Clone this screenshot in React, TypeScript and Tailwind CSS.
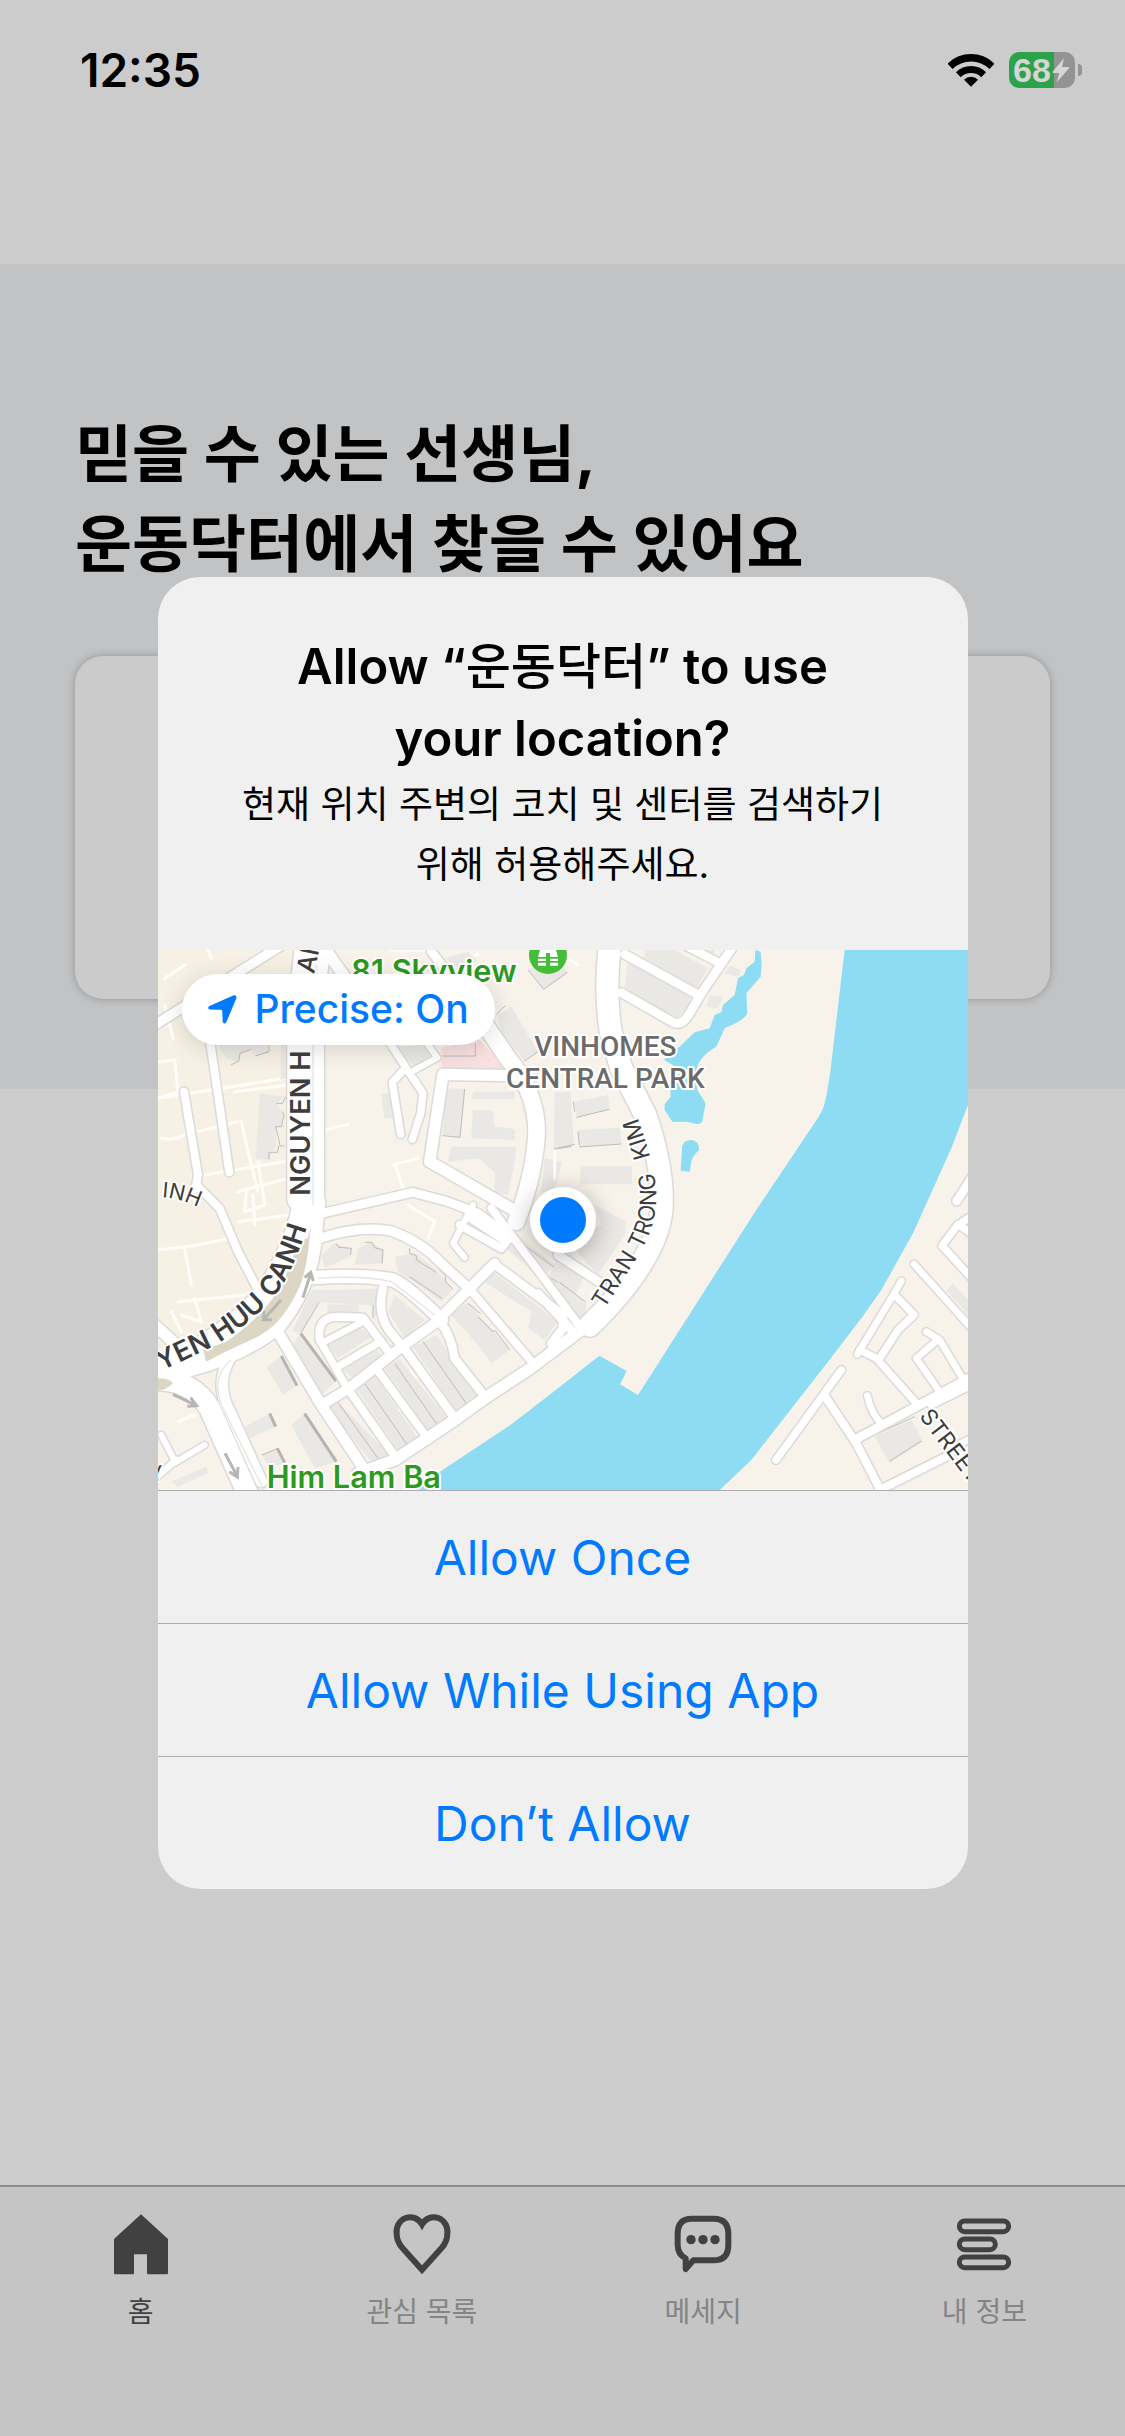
import React from "react";

type Road = [width: number, d: string];
type Sector = { at: string; roads: Road[]; lanes: string[]; buildings: string[]; edges: string[] };

/* The city map is drawn in four sectors, each with its own origin. */
const sectors: Sector[] = [
  {
    at: "translate(0 0)",
    roads: [
      [28, "M-10 240 L380 -5"],
      [34, "M500 10 L570 110 L700 290"],
      [26, "M820 20 L1000 250"],
      [24, "M155 280 L214 682"],
      [24, "M78 440 L120 690 L112 735"],
      [22, "M690 285 L745 370 L795 445 L788 505 L763 583"],
      [22, "M740 372 L703 412 L728 568"],
      [18, "M770 375 L838 338 L800 285"],
      [34, "M1060 392 L855 388 L815 650 L1075 800"],
      [50, "M985 245 L1050 340 Q1135 440 1136 560 Q1130 690 1075 830"],
      [26, "M480 808 L765 742 L870 770 L960 805 L1060 880"],
      [84, "M455 -20 L430 220 L430 760"],
      [28, "M505 0 L484 160 L484 780"],
    ],
    lanes: [
      "M0 460 L380 400", "M140 690 L380 650", "M230 440 L390 420", "M0 350 L50 345 L60 440 L0 460",
      "M250 530 L270 620 L300 740", "M20 180 L45 280", "M120 560 L240 530", "M300 650 L320 780 L260 800 L265 740",
      "M500 555 L570 538", "M705 660 L780 640", "M710 655 L735 730", "M10 580 Q60 590 90 560", "M700 15 L820 15",
      "M240 740 L390 700", "M150 15 L160 40 M20 100 L80 60", "M960 30 L860 50",
    ],
    buildings: [
      "M180 300 L330 300 L330 325 L290 330 L280 312 L245 325 L240 350 L205 340Z",
      "M305 445 L380 455 L355 475 L378 510 L370 545 L355 545 L355 600 L330 645 L293 643Z",
      "M368 300 L388 300 L388 400 L368 405Z",
      "M865 430 L920 432 L906 577 L853 572Z",
      "M945 440 L1070 440 L1070 462 L940 462Z",
      "M945 495 L1005 497 L1010 545 L1072 552 L1070 585 L940 580Z",
      "M880 605 L1075 605 L1070 650 L1050 750 L1010 745 L1010 680 L960 640 L870 650Z",
      "M1020 210 L1060 185 L1140 320 L1100 348 L1030 265Z",
      "M860 40 L930 20 L960 50 L900 70Z",
      "M1110 70 L1220 70 L1228 85 L1157 133Z",
      "M1190 440 L1240 440 L1240 605 L1188 612Z",
      "M1160 640 L1212 650 L1190 740 L1150 740Z",
      "M708 305 L800 300 L830 330 L765 360Z",
      "M670 450 L695 440 L705 520 L680 520Z",
    ],
    edges: [
      "M219 360 L243 347 L246 325 L280 313 M292 333 L333 320 V300",
      "M386 450 L374 475 L355 475 M374 500 L378 510 L370 545 H353 L362 580 L366 603 H380 M362 603 L358 622 H333 V643",
      "M920 432 L906 577 L853 572", "M1015 208 L1042 182", "M1100 348 L1140 320", "M1110 75 L1157 133 L1228 82",
      "M1188 612 L1240 605", "M855 333 H952 V295",
    ],
  },
  {
    at: "translate(1200 0)",
    roads: [
      [66, "M158 -20 Q138 130 158 260 L190 370 L262 510 Q320 680 310 800 Q292 950 95 1142"],
      [26, "M200 28 L425 152"],
      [26, "M190 143 L345 232 Q372 245 395 205 L430 145 L535 -10"],
      [24, "M360 -10 L480 52"],
      [26, "M1196 768 L1260 670"],
      [22, "M1200 840 L1260 800"],
    ],
    lanes: ["M0 20 L60 60", "M-10 620 L-10 700"],
    buildings: [
      "M210 50 L400 155 L380 200 L350 222 L200 125Z",
      "M260 15 L350 15 L450 70 L415 130 L260 40Z",
      "M375 15 L470 15 L470 35 L440 45Z",
      "M515 62 L550 75 L540 95 L500 85Z",
      "M455 150 L495 155 L480 190 L445 185Z",
      "M48 470 L150 450 L155 493 L55 517Z",
      "M62 555 L185 548 L190 596 L64 606Z",
      "M68 662 L222 662 L222 718 L66 718Z",
      "M0 450 L40 470 L48 600 L0 608Z",
      "M110 780 L205 830 L200 870 L130 840Z",
    ],
    edges: ["M55 517 L155 493 M46 470 L50 500", "M64 606 L190 597 M60 560 L64 600", "M0 609 L50 598"],
  },
  {
    at: "translate(0 810)",
    roads: [
      [24, "M115 -90 L185 -20 L240 110 L300 225"],
      [28, "M485 70 Q610 30 700 48 Q790 80 850 145 L935 222"],
      [40, "M470 188 Q610 178 705 195 Q750 215 850 315"],
      [18, "M945 -30 L885 85 L920 128"],
      [24, "M905 30 L1030 100 L1045 80 L930 5"],
      [30, "M1010 145 L930 225 L830 325 L725 400 L570 522 L490 570"],
      [26, "M1010 148 L1215 300 L1215 340 L1180 385 L1190 410"],
      [34, "M1290 330 L1110 465 L980 550 L880 622 L710 735 L600 775"],
      [24, "M935 222 L1130 450"],
      [26, "M845 320 Q880 360 890 430 L985 550"],
      [26, "M675 220 Q655 300 700 355 L740 402 L890 610"],
      [24, "M655 460 L812 675"],
      [24, "M570 522 L715 730"],
      [32, "M365 360 L490 570 L620 765"],
      [24, "M485 375 Q475 305 540 305 L615 308 L685 402"],
      [22, "M485 375 L565 515"],
      [20, "M490 385 L615 320"],
      [22, "M540 455 L670 378"],
      [70, "M445 -60 Q420 90 330 230 Q240 340 110 410 L-20 470"],
      [36, "M484 -40 L470 100 Q450 230 365 335 Q290 400 150 450 L-20 500"],
      [62, "M-20 495 Q100 490 155 580 L275 850"],
      [34, "M215 430 Q170 510 215 590 L310 800"],
      [34, "M-10 330 L120 450"],
      [18, "M10 660 L52 742 L140 690"],
      [20, "M55 735 L-10 790"],
    ],
    lanes: [
      "M0 105 L120 90", "M80 100 L100 210", "M120 90 L220 70", "M60 260 L260 240", "M110 250 L130 320 L70 300",
      "M285 -60 L290 30", "M240 20 L400 0", "M750 -30 L830 20 L810 70", "M60 620 L110 600", "M40 290 L70 350",
      "M760 490 L860 450", "M760 470 L820 600", "M670 610 L740 580",
    ],
    buildings: [
      "M490 120 L530 85 L580 100 L578 125 L500 158Z",
      "M600 100 L640 82 L675 105 L670 145 L590 150Z",
      "M710 125 L770 115 L830 160 L885 222 L850 260 L760 195 L720 170Z",
      "M460 225 L680 222 L650 310 L640 270 L480 262 L430 355 L402 350Z",
      "M508 268 L602 268 L602 295 L508 295Z",
      "M425 355 L535 498 L480 550 L400 400Z",
      "M505 380 L600 335 L640 365 L540 430Z",
      "M555 465 L655 405 L675 425 L585 490Z",
      "M505 580 L540 562 L695 720 L650 750Z",
      "M595 520 L650 480 L790 685 L730 720Z",
      "M680 460 L725 432 L875 620 L820 660Z",
      "M765 395 L835 360 L965 555 L905 605Z",
      "M690 290 L710 240 L800 315 L740 368Z",
      "M880 300 L930 262 L1055 404 L1000 445 L960 390Z",
      "M970 195 L1005 170 L1200 320 L1160 375 L1110 340 L1120 290Z",
      "M325 455 L370 425 L418 510 L375 540Z",
      "M260 635 L335 595 L352 635 L275 670Z",
      "M400 630 L440 598 L535 740 L470 760Z",
      "M310 720 L360 700 L385 750 L330 750Z",
      "M1030 90 L1080 60 L1190 150 L1150 190Z",
      "M40 800 L145 755 L150 775 L60 815Z",
      "M1200 120 L1240 110 L1275 190 L1240 270 L1160 215Z",
    ],
    edges: [
      "M535 85 L542 97 L580 100 L578 120 M620 82 H642 L650 98 L675 105 L672 146",
      "M755 100 V115 L775 122 V135 L835 172 M845 165 L862 183 V200 L885 222 M755 185 L852 250",
      "M430 352 L483 262", "M930 265 L968 296 M960 306 L1005 350 L1012 347 L1055 404",
      "M1075 72 L1187 156", "M1165 218 L1180 190 L1230 220", "M540 562 L660 730", "M620 505 L755 700",
      "M710 445 L845 640", "M795 380 L935 580", "M645 270 V310", "M312 720 L360 700",
    ],
  },
  {
    at: "translate(1200 810)",
    roads: [
      [24, "M-200 -20 L70 340"],
      [26, "M0 120 L130 205"],
      [26, "M-60 235 L50 355 L-60 440"],
      [22, "M654 735 L850 465"],
      [24, "M802 545 L895 685 L975 840"],
      [26, "M895 672 L1260 475"],
      [22, "M1120 570 L1260 500"],
      [20, "M928 542 Q940 600 975 630"],
      [20, "M898 418 L1000 250 L1030 198"],
      [22, "M1015 245 L1068 300 L1020 345 L965 430"],
      [22, "M905 405 L955 430 L1080 570"],
      [20, "M1105 350 L1145 375 L1220 500"],
      [20, "M1135 378 L1075 430 L1145 530"],
      [20, "M1068 147 L1250 350"],
      [22, "M1260 210 L1152 92 L1200 28 L1260 70"],
      [24, "M965 825 L1175 720"],
      [20, "M1180 700 L1260 660"],
    ],
    lanes: ["M0 330 L30 370"],
    buildings: [
      "M950 665 L1060 615 L1095 680 L995 745Z",
      "M1165 225 L1185 205 L1230 255 L1230 300Z",
      "M0 200 L85 262 L80 320 L0 255Z",
      "M20 70 L130 30 L200 60 L120 180Z",
    ],
    edges: ["M995 738 L1090 678", "M960 655 L1070 605", "M5 202 L82 260"],
  },
];

const halo = {
  stroke: "#ffffff",
  strokeWidth: 12,
  strokeLinejoin: "round" as const,
  paintOrder: "stroke" as const,
};

function CityMap() {
  return (
    <svg viewBox="0 15 2430 1620" className="block w-full" role="img" aria-label="Map of Vinhomes Central Park">
      <defs>
        <path id="canh" d="M10 1278 L160 1207 Q330 1105 385 1000 Q435 905 457 800" />
        <path id="kim" d="M1336 1096 L1435 942 Q1495 850 1495 750 Q1490 640 1415 460" />
        <path id="inh" d="M4 757 Q70 757 150 802" />
        <path id="street" d="M2282 1414 L2500 1700" />
      </defs>
      <rect y="15" width="2430" height="1620" fill="#f7f3eb" />
      <path d="M0 15 H410 L388 400 V780 L330 1030 L120 1230 L0 1290Z" fill="#f6f1e4" />
      <path d="M850 310 L960 280 L1045 370 L850 368Z" fill="#f8dfe0" />
      <g fill="#8ddcf4">
        <path d="M2060 15 L2017 380 L2006 450 L1997 485 L1984 512 L1785 810 L1440 1350 L1386 1318 L1406 1278 L1324 1232 L1200 1330 L1060 1438 L858 1572 L760 1640 H1680 L1780 1545 L2010 1250 L2110 1120 L2170 1035 L2265 865 L2380 610 L2430 480 V15Z" />
        <path d="M1792 15 L1808 20 L1811 60 L1808 95 L1765 145 L1768 205 Q1760 225 1700 250 L1675 305 Q1620 335 1615 380 L1618 435 L1643 475 L1632 532 L1620 538 L1585 530 H1543 L1520 495 V478 L1538 455 L1535 400 L1580 380 L1518 345 L1565 305 L1610 262 L1655 250 L1670 210 L1690 202 L1695 180 L1730 150 L1740 100 L1758 90 L1765 70 L1790 50Z" />
        <path d="M1572 615 Q1570 585 1600 585 Q1625 588 1623 615 Q1602 635 1600 650 L1595 680 L1568 677Z" />
      </g>
      {sectors.map((s) => (
        <g key={s.at} transform={s.at}>
          {s.lanes.map((d) => (
            <path key={d} d={d} fill="none" stroke="#fffdf8" strokeWidth="9" strokeLinecap="round" />
          ))}
          {s.buildings.map((d) => (
            <path key={d} d={d} fill="#eae8e4" />
          ))}
          {s.edges.map((d) => (
            <path key={d} d={d} fill="none" stroke="#bdbcb9" strokeWidth="3" />
          ))}
        </g>
      ))}
      <g stroke="#b5b4b0" strokeWidth="9" fill="none">
        <path d="M428 1165 L534 1308 M370 1233 L417 1322 M335 1405 L353 1445 M440 1406 L535 1550 M358 1510 L380 1553" />
      </g>
      {sectors.map((s) => (
        <g key={s.at} transform={s.at} fill="none" stroke="#dbdad8" strokeLinecap="round" strokeLinejoin="round">
          {s.roads.map(([w, d]) => (
            <path key={d} d={d} strokeWidth={w + 9} />
          ))}
        </g>
      ))}
      {sectors.map((s) => (
        <g key={s.at} transform={s.at} fill="none" stroke="#ffffff" strokeLinecap="round" strokeLinejoin="round">
          {s.roads.map(([w, d]) => (
            <path key={d} d={d} strokeWidth={w} />
          ))}
        </g>
      ))}
      <path
        d="M452 880 Q450 960 425 1025 Q380 1120 330 1155 Q290 1185 230 1205 L145 1250 L135 1215 L205 1190 Q320 1110 370 1020 Q410 940 415 890Z"
        fill="#dcd7c5"
      />
      <path d="M0 1300 Q35 1300 45 1315 Q25 1335 0 1338Z" fill="#dcd7c5" />
      <path d="M475 60 L465 300 V780 M220 1245 Q150 1300 200 1400 L320 1640 M480 1000 Q620 990 700 1010 L830 1110" fill="none" stroke="#e6e5e4" strokeWidth="4" />
      <g fill="none" stroke="#b6b6b5" strokeWidth="9">
        <path d="M435 1058 L458 985 M440 998 L458 982 L466 1008" />
        <path d="M369 1065 L318 1122 M318 1098 L316 1124 L342 1124" />
        <path d="M45 1348 L112 1380 M98 1358 L116 1382 L88 1384" />
        <path d="M201 1525 L237 1592 M214 1580 L238 1596 L240 1566" />
      </g>

      <g fontFamily="Inter, 'Liberation Sans', sans-serif" fill="#3d3d3d">
        <text fontSize="82" fontWeight="600" transform="translate(456 752) rotate(-90)" {...halo}>NGUYEN H</text>
        <text fontSize="76" fontWeight="500" transform="translate(468 88) rotate(-78)" {...halo}>AI</text>
        <text fontSize="82" fontWeight="600" {...halo}><textPath href="#canh">YEN</textPath></text>
        <text fontSize="82" fontWeight="600" {...halo}><textPath href="#canh" startOffset="194">HUU</textPath></text>
        <text fontSize="82" fontWeight="600" {...halo}><textPath href="#canh" startOffset="400">CANH</textPath></text>
        <text fontSize="68" {...halo}><textPath href="#kim" startOffset="4">TRAN</textPath></text>
        <text fontSize="68" {...halo}><textPath href="#kim" startOffset="214">TRONG</textPath></text>
        <text fontSize="68" {...halo}><textPath href="#kim" startOffset="502">KIM</textPath></text>
        <text fontSize="64" {...halo}><textPath href="#inh" startOffset="8">INH</textPath></text>
        <text fontSize="68" {...halo}><textPath href="#street">STREET</textPath></text>
        <text fontSize="64" transform="translate(-24 1612) rotate(-8)" {...halo}>Y</text>
        <text x="326" y="1628" fontSize="92" fontWeight="600" {...halo} fill="#2b9a1f">Him Lam Ba</text>
        <text x="580" y="112" fontSize="92" fontWeight="600" {...halo} fill="#2b9a1f">81 Skyview</text>
      </g>
      <g fontFamily="Roboto, 'Liberation Sans', sans-serif" fontSize="84" fontWeight="500" fill="#6b6b6b" textAnchor="middle">
        <text x="1342" y="333" {...halo}>VINHOMES</text>
        <text x="1342" y="430" {...halo}>CENTRAL PARK</text>
      </g>
      <circle cx="1170" cy="30" r="57" fill="#45bd38" />
      <g fill="#ffffff">
        <path d="M1148 8 H1163 V14 H1177 V8 H1192 L1200 36 H1176 V24 H1164 V36 H1140Z" />
        <path d="M1140 41 H1164 V48 H1140Z M1176 41 H1200 V48 H1176Z M1140 53 H1164 V62 H1140Z M1176 53 H1200 V62 H1176Z" />
      </g>
    </svg>
  );
}

function WifiIcon() {
  return (
    <svg viewBox="54 35 138 102" className="w-[46px]" aria-label="Wi-Fi">
      <path d="M60 75 A90 90 0 0 1 186 75" fill="none" stroke="#000" strokeWidth="22" />
      <path d="M85 100 A55 55 0 0 1 161 100" fill="none" stroke="#000" strokeWidth="21" />
      <path d="M123 136 L102 115 A30 30 0 0 1 144 115Z" />
    </svg>
  );
}

function Battery() {
  return (
    <div className="flex items-center gap-[3px]" aria-label="Battery 68%, charging">
      <div className="flex h-9 w-[66px] items-center gap-px rounded-[10px] bg-linear-to-r from-[#2ea24a] from-68% to-[#939393] to-68% pl-1 text-[#d6d6d6]">
        <span className="font-['Liberation_Sans',sans-serif] text-[34px] leading-9 font-bold">68</span>
        <svg viewBox="0 0 54 74" className="w-[18px]" aria-hidden="true">
          <path d="M36 0 L2 41 Q0 45 5 45 H22 L14 73 L51 31 Q53 27 48 27 H30Z" fill="currentColor" />
        </svg>
      </div>
      <div className="h-3 w-1 rounded-r-full bg-[#939393]" />
    </div>
  );
}

const tabs = [
  {
    label: "홈",
    active: true,
    icon: (
      <path d="M96 16 L177 90 V193 Q177 196 174 196 H117 Q114 196 114 193 V136 H75 V193 Q75 196 72 196 H18 Q15 196 15 193 V90Z" fill="currentColor" />
    ),
  },
  {
    label: "관심 목록",
    active: false,
    icon: (
      <path d="M96 182 L38 118 Q20 98 20 74 A41 43 0 0 1 96 46 A41 43 0 0 1 172 74 Q172 98 154 118Z" fill="none" stroke="currentColor" strokeWidth="18" />
    ),
  },
  {
    label: "메세지",
    active: false,
    icon: (
      <>
        <path d="M62 29 H128 Q172 29 172 75 V108 Q172 154 128 154 H67 L44 180 V148 Q20 136 20 108 V75 Q20 29 62 29Z" fill="none" stroke="currentColor" strokeWidth="18" strokeLinejoin="round" />
        <circle cx="60" cy="92" r="14" fill="currentColor" />
        <circle cx="96" cy="92" r="14" fill="currentColor" />
        <circle cx="132" cy="92" r="14" fill="currentColor" />
      </>
    ),
  },
  {
    label: "내 정보",
    active: false,
    icon: (
      <g fill="none" stroke="currentColor" strokeWidth="15">
        <rect x="22" y="36" width="148" height="32" rx="16" />
        <rect x="22" y="90" width="108" height="32" rx="16" />
        <rect x="22" y="144" width="148" height="32" rx="16" />
      </g>
    ),
  },
];

const choices = ["Allow Once", "Allow While Using App", "Don’t Allow"];

export default function App() {
  return (
    <div className="relative flex min-h-screen flex-col bg-[#cccccc] font-['Inter','Noto_Sans_CJK_KR',sans-serif] text-black">
      <header className="flex h-[264px] items-start justify-between pt-10 pr-[43px] pl-20">
        <time className="text-[46px] leading-[60px] font-semibold">12:35</time>
        <div className="flex h-[60px] items-center gap-[15px]">
          <WifiIcon />
          <Battery />
        </div>
      </header>

      <main className="bg-[#c2c3c5] px-[75px] pt-[146px] pb-[90px]">
        <h1 className="text-[62px] leading-[90px] font-bold">
          믿을 수 있는 선생님,
          <br />
          운동닥터에서 찾을 수 있어요
        </h1>
        <div className="mt-[66px] h-[343px] rounded-[28px] bg-[#cbcbcb] shadow-[0_0_8px_rgba(0,0,0,0.25)]" />
      </main>

      <nav className="mt-auto grid h-[251px] grid-cols-4 items-start border-t-2 border-[#8c8c8c] bg-[#c5c5c5] pt-[22px]">
        {tabs.map((tab) => (
          <a key={tab.label} href="#" className="flex flex-col items-center gap-[15px] text-[#414141]">
            <svg viewBox="0 0 192 204" className="w-16" aria-hidden="true">
              {tab.icon}
            </svg>
            <span className={tab.active ? "text-[28px] leading-10" : "text-[28px] leading-10 text-[#848484]"}>{tab.label}</span>
          </a>
        ))}
      </nav>

      <div className="absolute inset-0 flex items-center justify-center pt-[30px]">
        <section role="dialog" aria-labelledby="ask" className="w-[72%] overflow-hidden rounded-[42px] bg-[#f0f0f0] text-center">
          <div className="px-16 pt-[54px] pb-[55px]">
            <h2 id="ask" className="text-[49px] leading-[72px] font-semibold">
              Allow “<span className="font-medium">운동닥터</span>” to use
              <br />
              your location?
            </h2>
            <p className="text-[37px] leading-[60px]">
              현재 위치 주변의 코치 및 센터를 검색하기
              <br />
              위해 허용해주세요.
            </p>
          </div>
          <div className="relative">
            <CityMap />
            <button
              type="button"
              className="absolute top-6 left-6 flex h-[71px] items-center gap-[18px] rounded-full bg-white px-[26px] text-[39px] font-medium text-[#007aff] shadow-[0_4px_24px_rgba(0,0,0,0.14)]"
            >
              <svg viewBox="0 0 90 90" className="w-[29px]" aria-hidden="true">
                <path d="M80 1 Q90 0 88 10 L57 84 Q52 92 46 85 L44 49 Q43 46 40 46 L5 45 Q-3 42 3 35Z" fill="currentColor" />
              </svg>
              Precise: On
            </button>
            <div className="pointer-events-none absolute inset-0 flex items-center justify-center">
              <div className="size-[66px] rounded-full border-10 border-white bg-[#007aff] shadow-[0_4px_24px_rgba(0,0,0,0.3)]" />
            </div>
          </div>
          {choices.map((choice) => (
            <button
              key={choice}
              type="button"
              className="block h-[133px] w-full border-t border-[#adadad] pt-[2px] text-[48px] text-[#007aff]"
            >
              {choice}
            </button>
          ))}
        </section>
      </div>
    </div>
  );
}
